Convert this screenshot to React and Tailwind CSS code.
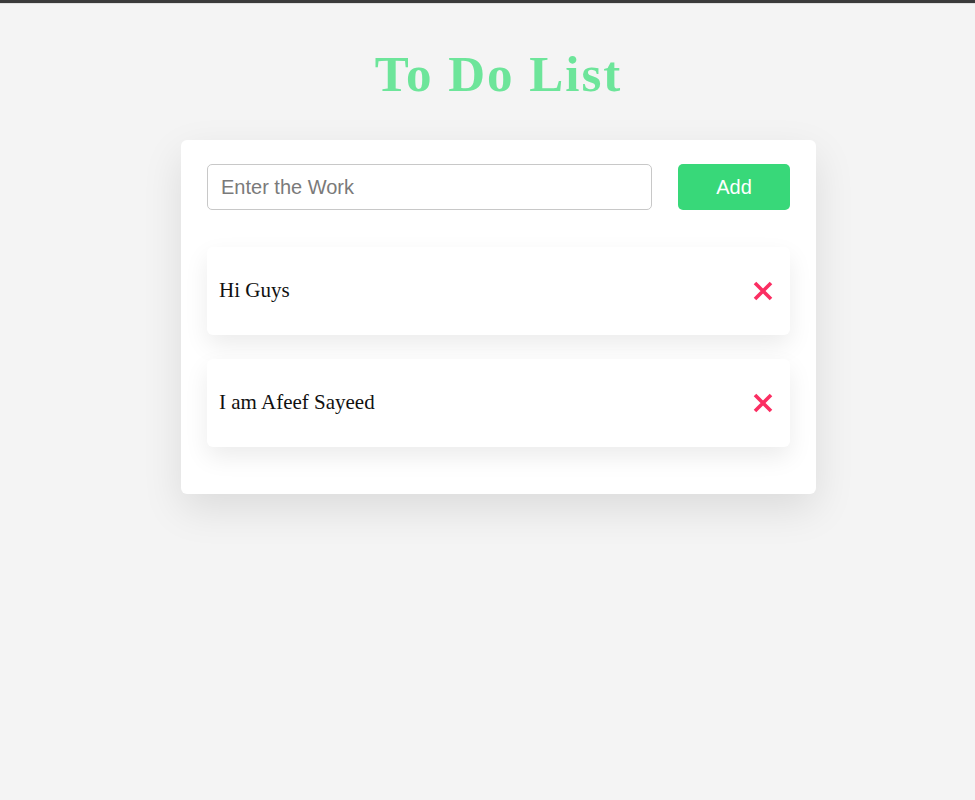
import React from "react";

function XIcon() {
  return (
    <svg width="22" height="22" viewBox="0 0 22 22" fill="none">
      <path d="M3 3 L19 19 M19 3 L3 19" stroke="#fb2e62" strokeWidth="3.6" strokeLinecap="butt" />
    </svg>
  );
}

function Item({ text }) {
  return (
    <div className="flex h-[88px] items-center justify-between rounded-[6px] bg-white pl-3 pr-4 shadow-[0_10px_25px_rgba(0,0,0,0.08)]">
      <span className="text-[21px] text-[#111] [font-family:'Liberation_Serif',serif]">{text}</span>
      <XIcon />
    </div>
  );
}

export default function App() {
  return (
    <div className="min-h-[800px] bg-[#f4f4f4]">
      <div className="h-[3px] bg-[#3b3b3b]" />
      <div className="h-px bg-[#e0e0e0]" />
      <div className="flex flex-col items-center pl-[22px]">
        <h1 className="mt-[42px] text-[51px] font-bold leading-[56px] tracking-[2px] text-[#6de59a] [font-family:'Liberation_Serif',serif]">
          To Do List
        </h1>
        <div className="mt-[38px] w-[635px] rounded-[6px] bg-white px-[26px] pt-[24px] pb-[47px] shadow-[0_15px_40px_rgba(0,0,0,0.10)]">
          <div className="flex items-center gap-[26px]">
            <input
              placeholder="Enter the Work"
              className="h-[46px] flex-1 rounded-[5px] border border-[#c8c8c8] bg-white px-[13px] text-[20px] text-[#333] outline-none placeholder:text-[#7a7a7a] [font-family:'Liberation_Sans',sans-serif]"
            />
            <button className="h-[46px] w-[112px] rounded-[5px] bg-[#38d879] text-[20px] text-white [font-family:'Liberation_Sans',sans-serif]">
              Add
            </button>
          </div>
          <div className="mt-[37px] flex flex-col gap-[24px]">
            <Item text="Hi Guys" />
            <Item text="I am Afeef Sayeed" />
          </div>
        </div>
      </div>
    </div>
  );
}
